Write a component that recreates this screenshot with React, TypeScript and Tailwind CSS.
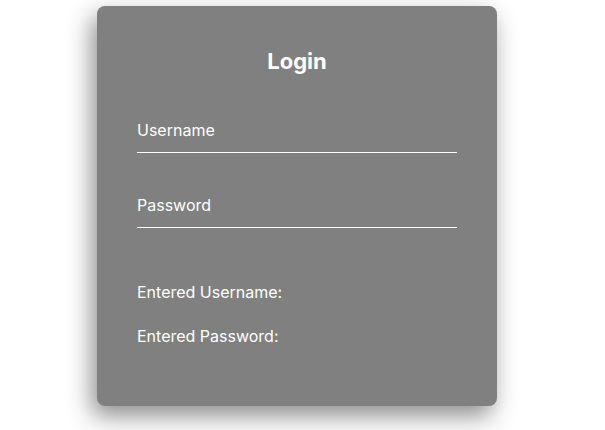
import React, { useState } from 'react';

function App() {
  const [username, setUsername] = useState('');
  const [password, setPassword] = useState('');
  return (
    <div className="min-h-screen bg-white font-['Inter',_'Liberation_Sans',_sans-serif]">
      <div className="pt-[6px] pl-[97px]">
        <div className="w-[400px] h-[400px] bg-[#808080] rounded-lg px-10 pt-10 flex flex-col text-white shadow-[-5px_10px_24px_rgba(0,0,0,0.45)]">
          <h1 className="text-[22px] leading-[30px] font-bold text-center">Login</h1>
          <input
            className="mt-[35px] h-[42px] pb-[4px] bg-transparent border-b border-white text-base outline-none placeholder:text-white"
            placeholder="Username"
            value={username}
            onChange={(e) => setUsername(e.target.value)}
          />
          <input
            type="password"
            className="mt-[33px] h-[42px] pb-[4px] bg-transparent border-b border-white text-base outline-none placeholder:text-white"
            placeholder="Password"
            value={password}
            onChange={(e) => setPassword(e.target.value)}
          />
          <p className="mt-[52px] text-base leading-6">Entered Username: {username}</p>
          <p className="mt-5 text-base leading-6">Entered Password: {password}</p>
        </div>
      </div>
    </div>
  );
}

export default App;
